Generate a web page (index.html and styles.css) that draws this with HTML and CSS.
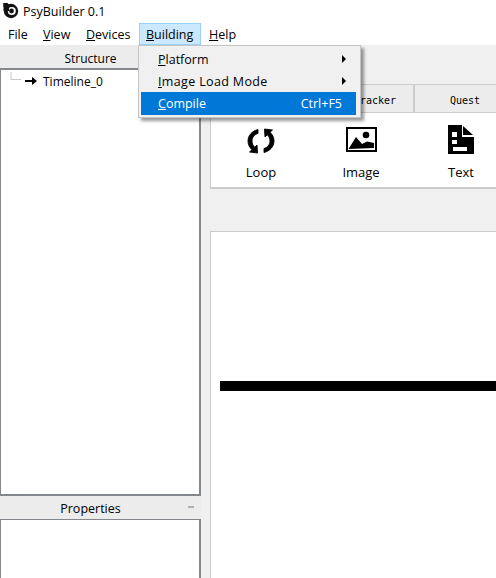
FILE: index.html
```html
<!DOCTYPE html>
<html lang="en">
<head>
<meta charset="utf-8">
<title>PsyBuilder 0.1</title>
<link rel="stylesheet" href="styles.css">
</head>
<body>
<div class="app">
  <header class="titlebar">
    <svg class="logo" width="18" height="18" viewBox="0 0 18 18"><circle cx="8" cy="9" r="7.200" fill="#111"/><path d="M0.500 1h4l3 4H.5z" fill="#111"/><path d="M0.500 1h4v8H.5z" fill="#111"/><circle cx="8.800" cy="9" r="4" fill="#fff"/><path d="M3.500 5h2.500v4H3.500z" fill="#111"/><circle cx="8.500" cy="9" r="2.400" fill="#111"/></svg>
    <span>PsyBuilder 0.1</span>
  </header>
  <nav class="menubar">
    <span class="menu-item file">File</span>
    <span class="menu-item view"><u>V</u>iew</span>
    <span class="menu-item devices"><u>D</u>evices</span>
    <span class="menu-item building active"><u>B</u>uilding</span>
    <span class="menu-item help"><u>H</u>elp</span>
  </nav>
  <main class="workspace">
    <aside class="left-dock">
      <div class="dock-title structure-title">Structure</div>
      <div class="tree">
        <div class="tree-row">
          <svg class="branch" width="22" height="10" viewBox="0 0 22 10"><path d="M1 0v7.500h10" fill="none" stroke="#c8c8c8"/></svg>
          <svg class="arrow" width="12" height="10" viewBox="0 0 12 10"><path d="M0 4h7V1l5 4-5 4V6H0z" fill="#000"/></svg>
          <span>Timeline_0</span>
        </div>
      </div>
      <div class="dock-title properties-title">Properties<i class="dash"></i></div>
      <div class="properties"></div>
    </aside>
    <section class="center">
      <div class="tabs">
        <div class="tab first">Base</div>
        <div class="tab">Eye Tracker</div>
        <div class="tab">Quest</div>
      </div>
      <div class="palette">
        <div class="tool">
          <svg width="32" height="32" viewBox="0 0 32 32"><path d="M13 4.500C7 6 3 10.500 3 16c0 3.500 1.500 6.500 4 8.700L4.500 27l8 1-.5-8-2.300 2.200C8 20.500 7 18.500 7 16c0-3.500 2.500-6.700 6-7.500zM19 27.500c6-1.500 10-6 10-11.500 0-3.500-1.500-6.500-4-8.700L27.500 5l-8-1 .5 8 2.300-2.200c1.700 1.700 2.700 3.700 2.700 6.200 0 3.500-2.500 6.700-6 7.500z" fill="#000" stroke="#000" stroke-width=".9"/></svg>
          <span>Loop</span>
        </div>
        <div class="tool">
          <svg width="32" height="32" viewBox="0 0 32 32"><path d="M2 3h29v23H2z" fill="none" stroke="#000" stroke-width="2"/><path d="M3.500 24 11 12l6 7 5-2.500 7 1.500v5z" fill="#000"/><circle cx="21" cy="10" r="3.300" fill="#000"/></svg>
          <span>Image</span>
        </div>
        <div class="tool">
          <svg width="32" height="32" viewBox="0 0 32 32"><path d="M3 0h14v12h12v17H3z" fill="#000"/><path d="M18 1l10 9H18z" fill="#000"/><path d="M7 7h5v5H7zM7 15h5v4H7zM8 22h14v4H8z" fill="#fff"/></svg>
          <span>Text</span>
        </div>
      </div>
      <div class="canvas"><div class="stage-bar"></div></div>
    </section>
  </main>
  <div class="dropdown">
    <div class="drop-row"><span><u>P</u>latform</span><i class="caret"></i></div>
    <div class="drop-row"><span class="spaced"><u>I</u>mage Load Mode</span><i class="caret"></i></div>
    <div class="drop-row selected"><span><u>C</u>ompile</span><span>Ctrl+F5</span></div>
  </div>
</div>
</body>
</html>
```
FILE: styles.css
```css
* { box-sizing: border-box; }
html, body { margin: 0; padding: 0; }
body { width: 496px; height: 578px; overflow: hidden; background: #f0f0f0; font-family: "Open Sans", "Noto Sans", sans-serif; font-size: 12.500px; color: #000; }
.app { position: relative; width: 496px; height: 578px; display: flex; flex-direction: column; overflow: hidden; }
.titlebar { height: 23px; background: #fff; display: flex; align-items: center; padding-left: 3px; padding-bottom: 1px; gap: 2px; }
.logo { flex: none; }
.menubar { height: 22px; background: #fff; display: flex; }
.menu-item { height: 22px; line-height: 21px; padding: 0 7px; border: 1px solid transparent; }
.menu-item.file { width: 35px; }
.menu-item.view { width: 43px; }
.menu-item.devices { width: 61px; }
.menu-item.building { width: 62px; padding: 0 6px; }
.menu-item.active { background: #cce8ff; border-color: #99d1ff; }
.workspace { flex: 1; display: flex; min-height: 0; }
.left-dock { width: 201px; flex: none; display: flex; flex-direction: column; }
.dock-title { text-align: center; background: #ececec; position: relative; }
.structure-title { height: 25px; line-height: 27px; padding-right: 20px; font-size: 12px; border-bottom: 2px solid #84878c; }
.properties-title { height: 26px; line-height: 25px; padding-right: 20px; border-top: 2px solid #84878c; border-bottom: 1px solid #84878c; }
.dash { position: absolute; left: 188px; top: 10px; width: 6px; height: 2px; background: #b0b0b0; }
.tree { height: 424px; background: #fff; border-left: 1px solid #84878c; border-right: 2px solid #84878c; }
.tree-row { display: flex; align-items: center; height: 22px; padding-left: 9px; font-size: 12px; }
.branch { flex: none; margin-top: -8px; margin-right: -9px; }
.arrow { flex: none; margin-left: 2px; margin-right: 6px; }
.properties { flex: 1; background: #fff; border-left: 1px solid #84878c; border-right: 2px solid #84878c; }
.center { flex: 1; min-width: 0; overflow: hidden; padding: 39px 0 0 9px; }
.tabs { display: flex; height: 28px; width: 320px; border-top: 1px solid #ccc; background: #ececec; }
.tab { width: 102px; flex: none; text-align: center; line-height: 31px; font-family: "DejaVu Sans Mono", monospace; font-size: 10px; border-right: 2px solid #ccc; }
.tab.first { width: 103px; }
.palette { height: 77px; display: flex; background: #fff; border-top: 1px solid #ccc; border-left: 1px solid #ccc; border-bottom: 2px solid #ccc; font-size: 13px; }
.tool { width: 100px; flex: none; display: flex; flex-direction: column; align-items: center; padding-top: 12px; gap: 6px; line-height: 18px; }
.canvas { margin-top: 42px; height: 400px; background: #fff; border-top: 1px solid #ccc; border-left: 1px solid #ccc; padding: 149px 0 0 9px; }
.stage-bar { height: 10px; background: #000; }
.dropdown { position: absolute; left: 138px; top: 45px; width: 223px; height: 73px; background: #f0f0f0; border: 1px solid #c4c4c4; padding: 2px; box-shadow: 3px 3px 3px rgba(0,0,0,.4); }
.drop-row { height: 22px; display: flex; align-items: center; justify-content: space-between; padding: 0 10px 0 17px; width: 215px; }
.drop-row.selected { height: 23px; background: #0078d7; color: #fff; padding-right: 14px; }
.spaced { letter-spacing: .35px; }
.caret { width: 0; height: 0; border-left: 4px solid #000; border-top: 4px solid transparent; border-bottom: 4px solid transparent; }
```
